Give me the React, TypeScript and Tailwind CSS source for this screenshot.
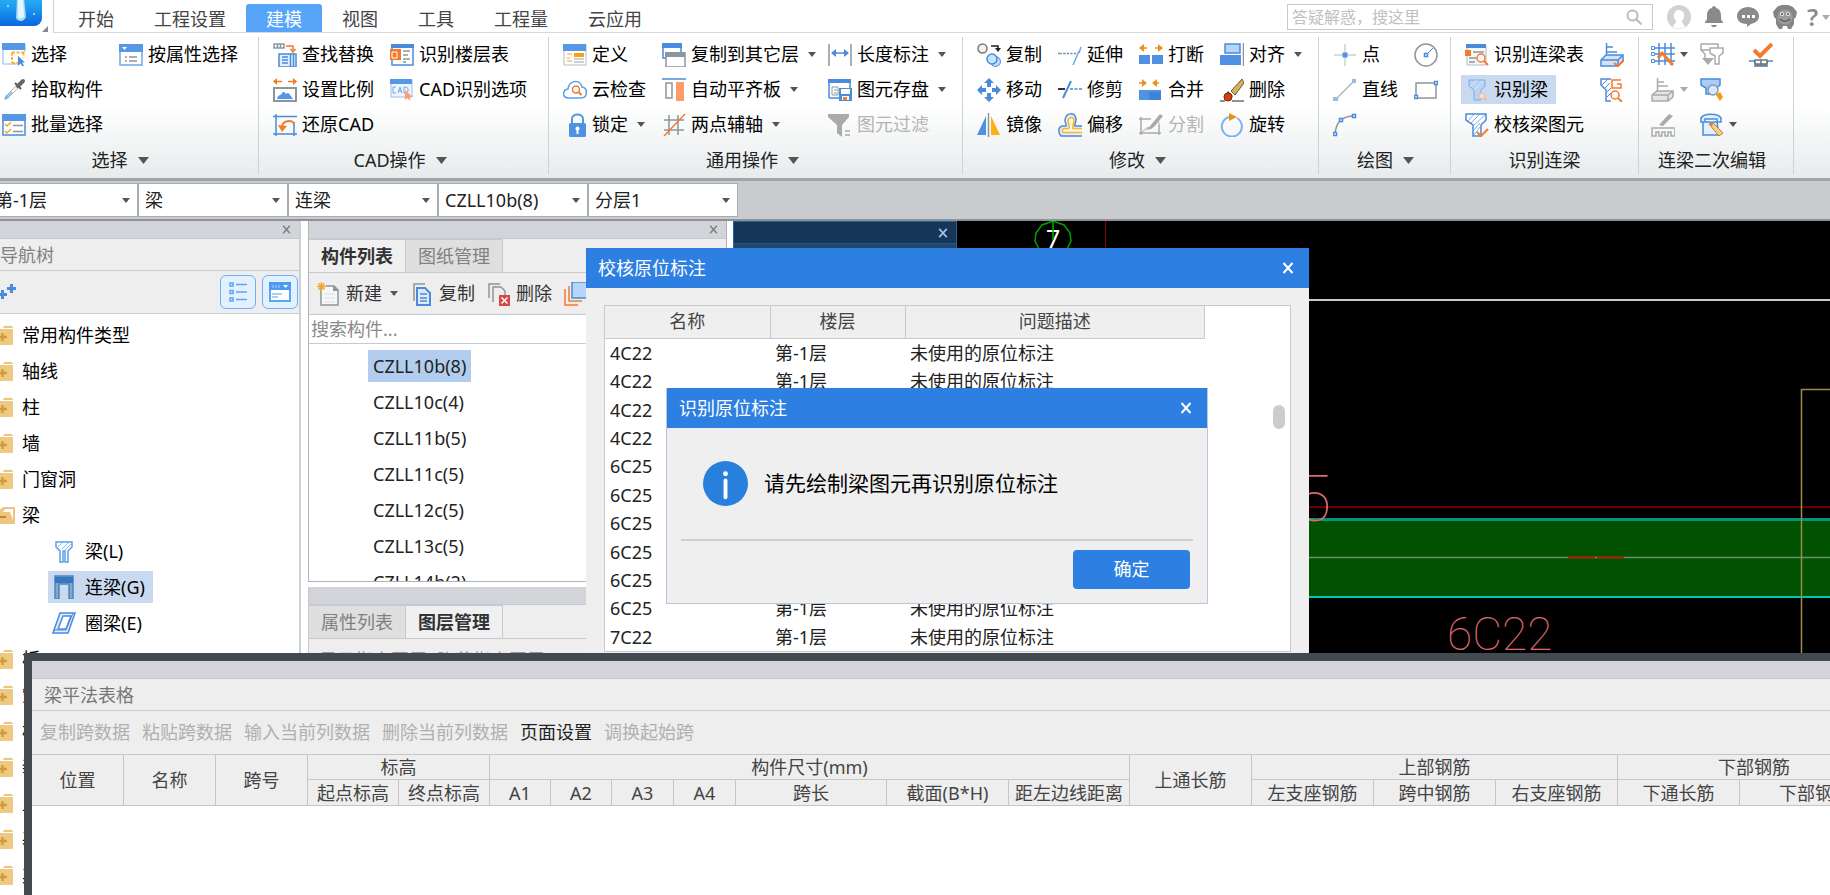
import React, { useState } from 'react';

const BLUE = '#4a8bdc';
const ORANGE = '#f47b2c';
const GRAY = '#8c979d';
const PALE = '#d3e4f8';
const MUTED = '#aaaaaa';

/* Every drawing lives on a 24 x 24 grid */
const icons: Record<string, React.ReactNode> = {
  select: (
    <>
      <path d="M1 21V1h22v8M1 21h15" stroke="#8fb6e6" />
      <path d="M0 0h23v7H0z" fill="#5598e6" />
      <path d="M10 9.5h12M10 9.5V20M10 20h6M21.500 9.500v5" stroke="#f8b62d" strokeWidth="2" strokeDasharray="3 1.5" />
      <path d="M16 13v10l2.500-2.500 2 3 1.500-1-2-3h3z" fill={BLUE} />
    </>
  ),
  picker: (
    <>
      <path d="M4 20l1-3L15 7l2 2L7 19z" fill="#fff" stroke="#aab2b6" />
      <path d="M2 22l2-5 3 3z" fill="#6ba9ef" />
      <path d="M5 19L10 14" stroke="#8fc0f5" strokeWidth="2" />
      <path d="M13 5L19 11" stroke="#555" strokeWidth="2" />
      <path d="M16 8l5-5" stroke="#666" strokeWidth="4" strokeLinecap="round" />
    </>
  ),
  batch: (
    <>
      <rect x="1" y="2" width="22" height="20" fill="#fff" stroke={BLUE} strokeWidth="1.500" />
      <path d="M0 1h24v7H0z" fill="#5598e6" />
      <path d="M3 11l2 2 4-4M3 18l2 2 4-4" stroke="#f8a12d" strokeWidth="1.500" />
      <path d="M11 12.500h10M11 18.500h10" stroke={GRAY} strokeWidth="1.500" />
    </>
  ),
  byProperty: (
    <>
      <rect x="1" y="2" width="22" height="20" fill="#fff" stroke="#6fa6e6" strokeWidth="1.500" />
      <path d="M0 1h24v8H0z" fill="#5598e6" />
      <path d="M3 4h5l-2.500 3z" fill="#fff" />
      <path d="M6 14h2M6 18h2M10 14h8M10 18h8" stroke={GRAY} strokeWidth="1.500" />
    </>
  ),
  findReplace: (
    <>
      <path d="M1 1h10v4H1zM4.500 1v4M7.500 1v4" stroke={GRAY} strokeWidth="1.500" />
      <path d="M13 3h7v4M17.500 6L20 9l2.500-3" stroke={ORANGE} strokeWidth="1.500" />
      <rect x="6" y="11" width="17" height="13" fill="#e2eefb" stroke={BLUE} strokeWidth="1.500" />
      <path d="M9 14h6M9 17h6M9 20h6M17.500 11v13M20.500 11v13" stroke={BLUE} strokeWidth="1.500" />
    </>
  ),
  scale: (
    <>
      <path d="M1 3.500h8M15 3.500h8" stroke={ORANGE} strokeWidth="1.500" />
      <path d="M0 3.500L4 0v7zM24 3.500L20 0v7z" fill={ORANGE} />
      <rect x="1" y="10" width="22" height="13" fill="#fff" stroke={GRAY} strokeWidth="2" />
      <path d="M4 21c1-5 4-3 5-6 1-2 3-1 4 1 2-2 3-1 4 1 1 1 2 2 3 4z" fill="#5598e6" />
    </>
  ),
  restore: (
    <>
      <path d="M3 1v22M21 9v14M0 3.500h24M0 21h24" stroke={BLUE} strokeWidth="1.500" />
      <path d="M9 13.500C10 8 18 6 21.500 11" stroke={ORANGE} strokeWidth="2" />
      <path d="M5 12l9 1-5 6z" fill={ORANGE} />
    </>
  ),
  floorTable: (
    <>
      <rect x="2" y="2" width="21" height="20" fill="#fff" stroke={BLUE} strokeWidth="1.500" />
      <path d="M1 1h23v4H1z" fill={BLUE} />
      <path d="M0 6h11v11H0z" fill={ORANGE} />
      <path d="M2 9h5v6H2z" stroke="#fff" />
      <path d="M13 8h7M13 12h5M13 16h7M13 19h3" stroke={GRAY} strokeWidth="1.500" />
    </>
  ),
  cadOption: (
    <>
      <rect x="1" y="2" width="21" height="17" fill="#eef5fd" stroke="#9cc0ea" />
      <path d="M0 1h22v5H0z" fill="#5598e6" />
      <path d="M6 9H3v6h3M8 15l2-6 2 6M9 13h3M14 9v6h2l2-1.500v-3L16 9z" stroke="#6fa6e6" />
      <path d="M15 12v10l2.500-2 2 2.500 1-.5-1-3h3z" fill="#f9a071" />
    </>
  ),
  define: (
    <>
      <rect x="1" y="2" width="22" height="20" fill="#fff" stroke="#b5bdc1" />
      <path d="M0 1h23v7H0z" fill="#5598e6" />
      <path d="M4 11h5M4 18h5M4 15h3" stroke="#f3c27c" strokeWidth="1.500" />
      <path d="M11 10h10v4H11z" fill="#f8a30c" />
      <path d="M11 16h10M11 19h10" stroke="#9aa4a9" />
    </>
  ),
  cloud: (
    <>
      <path d="M6 20C-1 20-1 12 5 11 6 2 17 1 19 9c6 1 6 11-1 11z" fill="#fff" stroke="#55a0ee" strokeWidth="1.500" />
      <circle cx="13" cy="11.500" r="3.500" stroke={ORANGE} strokeWidth="1.500" />
      <path d="M15.500 14l3 3" stroke={ORANGE} strokeWidth="2" />
    </>
  ),
  lock: (
    <>
      <path d="M9 11V6c0-6 11-6 11 0v5" stroke="#5598e6" strokeWidth="2" />
      <rect x="6" y="10" width="17" height="14" rx="1.500" fill="#4f92e2" />
      <path d="M14.500 17v4" stroke="#fff" strokeWidth="2" />
      <circle cx="14.500" cy="15.500" r="2" fill="#fff" />
    </>
  ),
  copyFloor: (
    <>
      <rect x="1" y="1" width="18" height="14" fill="#fff" stroke={BLUE} strokeWidth="1.500" />
      <path d="M0 0h20v5H0z" fill={BLUE} />
      <rect x="4" y="10" width="19" height="14" fill="#fff" stroke={GRAY} strokeWidth="1.500" />
      <path d="M3 9h20v5H3z" fill={GRAY} />
    </>
  ),
  alignSlab: (
    <>
      <path d="M0 1h24" stroke={BLUE} strokeWidth="1.500" />
      <path d="M4 5h6v15H4z" stroke={GRAY} strokeWidth="1.500" />
      <path d="M14 4h8v19h-8z" fill="#fc9b6b" />
    </>
  ),
  auxAxis: (
    <>
      <path d="M7 2v20M16 2v20M2 7h20M2 17h20" stroke={GRAY} strokeWidth="1.500" />
      <path d="M2 23L23 1" stroke={ORANGE} strokeWidth="1.500" />
    </>
  ),
  dimension: (
    <>
      <path d="M1 1v22M23 1v22" stroke={GRAY} strokeWidth="1.500" />
      <path d="M5 10h14" stroke={BLUE} strokeWidth="1.500" />
      <path d="M3 10l5-4v8zM21 10l-5-4v8z" fill={BLUE} />
    </>
  ),
  saveElement: (
    <>
      <path d="M1 20V2h21v8M1 20h10" stroke={BLUE} strokeWidth="1.500" />
      <path d="M0 1h23v4H0z" fill={BLUE} />
      <path d="M4 9h6v8H4zM6 12h3M6 15h3" stroke={GRAY} />
      <path d="M11 10h13v13H11z" fill="#4a8bdc" />
      <path d="M13 11h9v5h-9z" fill="#fff" />
      <path d="M14 18h7v4h-7z" fill="#fff" />
      <path d="M15 19h4v3h-4z" fill={ORANGE} />
    </>
  ),
  filter: (
    <>
      <path d="M0 1h21v3l-7 8v12l-5-4v-8L0 4z" fill={MUTED} />
      <path d="M17 18h5M17 22h5" stroke={MUTED} strokeWidth="1.500" />
    </>
  ),
  copy: (
    <>
      <circle cx="5.500" cy="5.500" r="4.500" fill="#f3f3f3" stroke="#77797b" strokeWidth="1.500" />
      <path d="M14 3h7v3" stroke="#222" strokeWidth="1.500" />
      <path d="M18 5h6l-3 4z" fill="#222" />
      <circle cx="18.500" cy="18.500" r="5" fill="#b9dcf8" stroke={BLUE} />
      <circle cx="15" cy="16" r="5" fill="#c8e6fb" stroke={BLUE} strokeWidth="1.500" />
    </>
  ),
  move: (
    <>
      <path d="M12 0l5 5h-3v4h-4V5H7zM12 24l5-5h-3v-4h-4v4H7zM0 12l5-5v3h4v4H5v3zM24 12l-5-5v3h-4v4h4v3z" fill={BLUE} />
    </>
  ),
  mirror: (
    <>
      <path d="M0 22L9 3v19z" fill="#4f92e2" />
      <path d="M23 22L14 3v19z" fill="#fbb117" />
      <path d="M11.500 0v24" stroke={GRAY} strokeWidth="1.500" />
    </>
  ),
  extend: (
    <>
      <path d="M0 10.500h8" stroke={GRAY} strokeWidth="1.500" strokeDasharray="4 1" />
      <path d="M9 10.500h10" stroke={BLUE} strokeWidth="1.500" strokeDasharray="2 1.500" />
      <path d="M15 22l6-14M21 10l2-6" stroke="#6fa6e6" strokeWidth="1.500" />
    </>
  ),
  trim: (
    <>
      <path d="M0 11h7" stroke="#333" strokeWidth="2" />
      <path d="M12 11h12" stroke={BLUE} strokeWidth="1.500" strokeDasharray="3 1.500" />
      <path d="M5 20l8-17" stroke={BLUE} strokeWidth="2" />
    </>
  ),
  offset: (
    <>
      <path d="M24 23H3c-3-3-3-9 1-10h4c1-2-1-2-1-6C8-1 17-1 18 6c0 5-2 5-1 7h7" fill="#e4eefa" stroke="#4a8bdc" strokeWidth="1.500" />
      <path d="M24 19.500H5c-1-1-1-4 1-4h5c1-3-1-5-1-8 1-4 6-4 6 0 0 3-2 5-1 8h9" fill="#fdf6e4" stroke="#f6b62c" strokeWidth="1.500" />
    </>
  ),
  breakIcon: (
    <>
      <path d="M2 5h6M16 5h6" stroke="#ee8e1e" strokeWidth="1.500" />
      <path d="M0 5l5-4v8zM24 5l-5-4v8z" fill="#ee8e1e" />
      <path d="M0 12h11v9H0zM13 12h11v9H13z" fill="#4f92e2" />
    </>
  ),
  merge: (
    <>
      <path d="M0 5h4M20 5h-4" stroke="#ee8e1e" strokeWidth="1.500" />
      <path d="M8 5L3 1v8zM13 5l5-4v8z" fill="#ee8e1e" />
      <path d="M0 12h22v10H0z" fill="#4f92e2" />
      <path d="M10 14h12v8H10z" fill="#3f84da" />
    </>
  ),
  split: (
    <>
      <path d="M0 6h12M2 4v18M0 20h22M20 12v10" stroke={MUTED} strokeWidth="1.500" />
      <path d="M2 20l7-6M20 9v4" stroke={MUTED} />
      <path d="M7 17l4-4L21 1l3 2-8 10-4 3z" fill={MUTED} />
    </>
  ),
  align: (
    <>
      <path d="M5 1h15v9H5z" fill="#b7d5f7" stroke="#4a8bdc" strokeWidth="1.500" />
      <path d="M0 12h21v10H0z" fill="#4f92e2" />
      <path d="M23.500 0v23" stroke={GRAY} strokeWidth="1.500" />
    </>
  ),
  erase: (
    <>
      <path d="M11 13L22 1l2 4L15 17z" fill="#d6b25c" stroke="#6b5530" />
      <path d="M8 13l5 5-3 3-5-4z" fill="#555" />
      <circle cx="8" cy="19" r="4" fill="#d4420c" stroke="#7a2404" />
      <path d="M0 23h5M12 23h12" stroke="#222" />
    </>
  ),
  rotate: (
    <>
      <path d="M9 4a10 10 0 1 0 8 1" stroke="#7fb2ec" strokeWidth="2" />
      <path d="M9 0l8 4-8 4z" fill="#ee8e1e" />
    </>
  ),
  point: (
    <>
      <path d="M12 1v22M1 12h22" stroke="#a9b9c8" />
      <rect x="9.500" y="9.500" width="5" height="5" fill="#4f92e2" />
    </>
  ),
  line: (
    <>
      <path d="M3 21L21 3" stroke="#a9b3ba" strokeWidth="1.500" />
      <path d="M0 19h5v4H0zM19 1h4v4h-4z" fill="#92bceb" />
    </>
  ),
  arc: (
    <>
      <path d="M2 21C3 9 10 3 21 3" stroke={GRAY} strokeWidth="1.500" />
      <path d="M.5 19.500h3v3h-3zM6.500 5.500h3v3h-3zM19.500 1.500h3v3h-3z" fill="#fff" stroke={BLUE} strokeWidth="1.500" />
    </>
  ),
  circle: (
    <>
      <circle cx="12" cy="12" r="11" fill="#fff" stroke={GRAY} strokeWidth="1.500" />
      <path d="M12 12l7-7" stroke={BLUE} />
      <path d="M10.500 10.500h3v3h-3z" fill="#fff" stroke={BLUE} strokeWidth="1.500" />
    </>
  ),
  rect: (
    <>
      <path d="M2 5h20v15H2z" fill="#fff" stroke={GRAY} strokeWidth="1.500" />
      <path d="M.5 17.500h3v3h-3zM20.500 3.500h3v3h-3z" fill="#fff" stroke={BLUE} strokeWidth="1.500" />
    </>
  ),
  beamTable: (
    <>
      <path d="M2 3h19v19H2z" fill="#f4f6f7" stroke="#b5bdc1" />
      <path d="M1 1h20v4H1z" fill={BLUE} />
      <path d="M0 7h6v6H0z" fill={ORANGE} />
      <path d="M8 9h11M4 15h7M4 19h6" stroke={GRAY} strokeWidth="1.500" />
      <circle cx="16" cy="15" r="4" fill="#fff" stroke={ORANGE} strokeWidth="1.500" />
      <path d="M19 18l4 4" stroke={ORANGE} strokeWidth="2" />
    </>
  ),
  recognize: (
    <>
      <path d="M4 2h16v6l-4 4v10H9V12L4 8z" fill="#b8d3f3" stroke="#7faae3" />
      <path d="M6 8l6-6M9 12l9-9" stroke="#dbe9f9" />
      <circle cx="17" cy="18" r="3" fill="#fbd9c8" stroke="#f4b69a" />
      <path d="M19 20l2 2" stroke="#f4b69a" strokeWidth="2" />
    </>
  ),
  checkBeam: (
    <>
      <path d="M1 1h20v6l-5 5v11H8V12L1 7z" fill="#fff" stroke={BLUE} strokeWidth="1.500" />
      <path d="M3 8l6-7M6 10l9-9M9 12L20 2M9 17l6-7M9 22l6-8" stroke={BLUE} strokeWidth=".7" />
      <path d="M12 19l4 4 7-7" stroke={ORANGE} strokeWidth="2" />
    </>
  ),
  beamMark: (
    <>
      <path d="M6.500 0v13M7 4h6M7 9h10" stroke={BLUE} strokeWidth="1.500" />
      <path d="M1 17l5-5h17v6l-5 5H1z" fill={PALE} stroke={BLUE} strokeWidth="1.500" />
      <path d="M1 17h17v6M18 17l5-5" stroke={BLUE} strokeWidth="1.500" />
      <path d="M14 20l4 3 6-6" stroke={ORANGE} strokeWidth="2" />
    </>
  ),
  beamGroup: (
    <>
      <path d="M11 1H1v6l5 5v11h5" stroke={BLUE} strokeWidth="1.500" />
      <path d="M2 7l6-6M5 10l5-5M7 14l4-4M7 19l4-4" stroke={BLUE} />
      <path d="M21 2h-9v8h9V6h-4" stroke={ORANGE} strokeWidth="1.500" />
      <circle cx="15" cy="17" r="4" fill="#fff" stroke={ORANGE} strokeWidth="1.500" />
      <path d="M18 20l4 4" stroke={ORANGE} strokeWidth="2" />
    </>
  ),
  gridEdit: (
    <>
      <path d="M8 0v22M14 0v22M20 0v22M4 5h20M4 11h20M4 18h20" stroke={BLUE} strokeWidth="1.500" />
      <path d="M.5 3.500h3v3h-3zM.5 9.500h3v3h-3zM.5 16.500h3v3h-3z" fill="#fff" stroke={BLUE} />
      <path d="M7 15l5-6M11 10l11 12" stroke={ORANGE} strokeWidth="3" />
    </>
  ),
  markOff: (
    <>
      <path d="M6.500 0v13M7 4h6M7 8h10" stroke={MUTED} strokeWidth="1.500" />
      <path d="M1 17l5-4h16v6l-5 4H1zM1 17h16v6M17 17l5-4" fill="#e5e5e5" stroke={MUTED} strokeWidth="1.500" />
    </>
  ),
  support: (
    <>
      <path d="M8 12L18 1l4 2L12 13z" fill={MUTED} />
      <path d="M1 23v-8h23v8h-4v-4h-3v4h-3v-4h-3v4H8v-4H5v4z" stroke={MUTED} strokeWidth="1.500" />
    </>
  ),
  convert: (
    <>
      <path d="M1 7V1h17v4M9 7H1l4 4v5M10 5h13v5l-4 3v8h-4v-8l-5-3z" stroke={MUTED} strokeWidth="1.500" />
      <path d="M2 15h12l-6 7z" fill={MUTED} />
    </>
  ),
  beamSearch: (
    <>
      <path d="M1 1h19v6l-4 3v6H6v-6L1 7z" fill="#a9cdf5" stroke={BLUE} strokeWidth="1.500" />
      <circle cx="13" cy="12" r="5" fill="#d8e8fa" stroke="#8a99b5" strokeWidth="1.500" />
      <path d="M16 17l4-3 3 5-3 4z" fill="#f39a12" />
    </>
  ),
  beamPencil: (
    <>
      <path d="M1 9V5c3-5 17-5 20 0v4h-4V6H5v3zM3 9h14l2 13H3z" fill="#e3effc" stroke={BLUE} strokeWidth="1.500" />
      <path d="M9 11l4-1 10 10-4 3z" fill="#f6d08b" stroke="#b7813a" />
      <path d="M9 11l4-1-1 4z" fill={ORANGE} />
    </>
  ),
  inspect: (
    <>
      <path d="M5 7l6 6L23 1" stroke={ORANGE} strokeWidth="4" />
      <path d="M0 18h5l2 4h10l2-4h5" stroke={BLUE} strokeWidth="1.500" />
      <path d="M6 17h12v4H6z" fill="#fff" stroke="#66747d" strokeWidth="1.500" />
      <path d="M12 17v4M5 23h14" stroke="#66747d" strokeWidth="1.500" />
    </>
  ),
  newDoc: (
    <>
      <path d="M4 7v16h17V8l-4-4H9" fill="#f7f7f7" stroke={GRAY} strokeWidth="1.500" />
      <path d="M16 3v6h6z" fill={GRAY} />
      <path d="M7 12h11M7 16h11M7 20h11" stroke="#dcdfe1" />
      <path d="M4.500 0v9M0 4.500h9M1.500 1.500l6 6M7.500 1.500l-6 6" stroke="#f5a62a" strokeWidth="1.500" />
    </>
  ),
  copyDoc: (
    <>
      <path d="M4 19V2h11" stroke={GRAY} strokeWidth="1.500" />
      <path d="M7 6h8l5 5v12H7z" fill="#dceafa" stroke={BLUE} strokeWidth="2" />
      <path d="M10 12h7M10 16h7M10 19h7" stroke={BLUE} strokeWidth="1.500" />
    </>
  ),
  deleteDoc: (
    <>
      <path d="M2 16V2h11M6 20V5h8l4 4v4" stroke={GRAY} strokeWidth="1.500" />
      <path d="M12 13h11v11H12z" fill="#d84848" />
      <path d="M14.500 15.500l6 6M20.500 15.500l-6 6" stroke="#fff" strokeWidth="1.500" />
    </>
  ),
  layerCopy: (
    <>
      <path d="M1 7v16h13M5 4v15h13" stroke={ORANGE} strokeWidth="1.500" />
      <path d="M8 0h16v16H8z" fill="#b7d5f7" stroke={BLUE} strokeWidth="1.500" />
    </>
  ),
  beam: (
    <>
      <path d="M4 3h16v5l-4 4v11h-3V12h-2v11H8V12L4 8z" fill="#fff" stroke="#5b9ee8" strokeWidth="1.500" />
      <path d="M6 8l5-5M10 10l7-7M13 11l6-6" stroke="#5b9ee8" strokeWidth=".7" />
    </>
  ),
  coupling: (
    <>
      <path d="M3 1h18v23h-4V9H7v15H3z" fill="#7fa9cb" stroke="#4d87b5" strokeWidth="1.500" />
      <path d="M3 2h18v6H3z" fill="#3477c2" />
    </>
  ),
  ring: (
    <>
      <path d="M8 2h15l-7 20H1z" fill="#dfecfb" stroke={BLUE} strokeWidth="1.500" />
      <path d="M11 5h8l-5 13H6z" fill="#fff" stroke={BLUE} strokeWidth="1.500" />
      <path d="M1 19h13l7-17" stroke={BLUE} />
    </>
  ),
};

const Icon: React.FC<{ name: string }> = ({ name }) => (
  <svg className="size-6 shrink-0" viewBox="0 0 24 24" fill="none" aria-hidden="true">
    {icons[name]}
  </svg>
);

const Arrow: React.FC<{ big?: boolean; muted?: boolean }> = ({ big, muted }) => (
  <svg className={big ? 'h-[7px] w-[11px] shrink-0' : 'h-[5px] w-2 shrink-0'} viewBox="0 0 10 6" preserveAspectRatio="none" aria-hidden="true">
    <path d="M0 0h10L5 6z" fill={muted ? '#aaa' : '#555'} />
  </svg>
);

const CloseX: React.FC<{ className: string }> = ({ className }) => (
  <svg className={className} viewBox="0 0 12 12" fill="none" aria-hidden="true">
    <path d="M1.500 1l9 10M10.500 1l-9 10" stroke="currentColor" strokeWidth="2" />
  </svg>
);

interface Tool {
  icon: string;
  label?: string;
  title?: string;
  arrow?: boolean;
  disabled?: boolean;
  active?: boolean;
}

interface ToolGroup {
  label: string;
  arrow?: boolean;
  className: string;
  columns: Tool[][];
}

const tabs = ['开始', '工程设置', '建模', '视图', '工具', '工程量', '云应用'];

const groups: ToolGroup[] = [
  {
    label: '选择',
    arrow: true,
    className: 'pl-0.5 pr-5',
    columns: [
      [
        { icon: 'select', label: '选择' },
        { icon: 'picker', label: '拾取构件' },
        { icon: 'batch', label: '批量选择' },
      ],
      [{ icon: 'byProperty', label: '按属性选择' }],
    ],
  },
  {
    label: 'CAD操作',
    arrow: true,
    className: 'pl-3.5 pr-[21px]',
    columns: [
      [
        { icon: 'findReplace', label: '查找替换' },
        { icon: 'scale', label: '设置比例' },
        { icon: 'restore', label: '还原CAD' },
      ],
      [
        { icon: 'floorTable', label: '识别楼层表' },
        { icon: 'cadOption', label: 'CAD识别选项' },
      ],
    ],
  },
  {
    label: '通用操作',
    arrow: true,
    className: 'pl-3.5 pr-5',
    columns: [
      [
        { icon: 'define', label: '定义' },
        { icon: 'cloud', label: '云检查' },
        { icon: 'lock', label: '锁定', arrow: true },
      ],
      [
        { icon: 'copyFloor', label: '复制到其它层', arrow: true },
        { icon: 'alignSlab', label: '自动平齐板', arrow: true },
        { icon: 'auxAxis', label: '两点辅轴', arrow: true },
      ],
      [
        { icon: 'dimension', label: '长度标注', arrow: true },
        { icon: 'saveElement', label: '图元存盘', arrow: true },
        { icon: 'filter', label: '图元过滤', disabled: true },
      ],
    ],
  },
  {
    label: '修改',
    arrow: true,
    className: 'pl-3.5 pr-5',
    columns: [
      [
        { icon: 'copy', label: '复制' },
        { icon: 'move', label: '移动' },
        { icon: 'mirror', label: '镜像' },
      ],
      [
        { icon: 'extend', label: '延伸' },
        { icon: 'trim', label: '修剪' },
        { icon: 'offset', label: '偏移' },
      ],
      [
        { icon: 'breakIcon', label: '打断' },
        { icon: 'merge', label: '合并' },
        { icon: 'split', label: '分割', disabled: true },
      ],
      [
        { icon: 'align', label: '对齐', arrow: true },
        { icon: 'erase', label: '删除' },
        { icon: 'rotate', label: '旋转' },
      ],
    ],
  },
  {
    label: '绘图',
    arrow: true,
    className: 'pl-3.5 pr-3',
    columns: [
      [{ icon: 'point', label: '点' }, { icon: 'line', label: '直线' }, { icon: 'arc', title: '弧线' }],
      [{ icon: 'circle', title: '圆' }, { icon: 'rect', title: '矩形' }],
    ],
  },
  {
    label: '识别连梁',
    className: 'pl-3.5 pr-3.5',
    columns: [
      [
        { icon: 'beamTable', label: '识别连梁表' },
        { icon: 'recognize', label: '识别梁', active: true },
        { icon: 'checkBeam', label: '校核梁图元' },
      ],
      [{ icon: 'beamMark', title: '识别原位标注' }, { icon: 'beamGroup', title: '编辑支座' }],
    ],
  },
  {
    label: '连梁二次编辑',
    className: 'pl-3 pr-5',
    columns: [
      [
        { icon: 'gridEdit', title: '重提梁跨', arrow: true },
        { icon: 'markOff', title: '原位标注', arrow: true, disabled: true },
        { icon: 'support', title: '刷新支座', disabled: true },
      ],
      [
        { icon: 'convert', title: '应用到同名梁', disabled: true },
        { icon: 'beamSearch', title: '查改标高' },
        { icon: 'beamPencil', title: '生成架立筋', arrow: true },
      ],
      [{ icon: 'inspect', title: '检查连梁' }],
    ],
  },
];

const ToolButton: React.FC<{ tool: Tool }> = ({ tool }) => (
  <div className="flex h-[35px] items-center">
    <button
      title={tool.title}
      disabled={tool.disabled}
      className={`flex h-[29px] items-center gap-[5px] whitespace-nowrap ${tool.disabled ? 'text-[#b4b4b4]' : 'text-black'} ${
        tool.active ? '-mx-1 bg-[#c9d9ef] pl-1 pr-2' : ''
      }`}
    >
      <Icon name={tool.icon} />
      {tool.label}
      {tool.arrow && (
        <span className={tool.label ? '-mr-1 ml-1' : '-mr-1'}>
          <Arrow muted={tool.disabled} />
        </span>
      )}
    </button>
  </div>
);

const Header: React.FC = () => {
  const [active, setActive] = useState('建模');
  return (
    <header className="flex h-[33px] shrink-0 bg-white">
      <div className="relative w-[54px] shrink-0 border-r border-[#cfcfcf]">
        <svg className="h-[33px] w-[53px]" viewBox="0 0 53 33" aria-hidden="true">
          <defs>
            <linearGradient id="logo" x1="0" y1="0" x2="0" y2="1">
              <stop offset="0" stopColor="#35c4f8" />
              <stop offset="0.500" stopColor="#22a5f2" />
              <stop offset="1" stopColor="#0b66dc" />
            </linearGradient>
          </defs>
          <rect x="-6" y="-20" width="48" height="46" rx="8" fill="url(#logo)" />
          <path d="M17-2h7l2 19c-2 5-8 5-10 1z" fill="#a9dcf8" />
          <path d="M18-2h5l1 18c-1 3-4 3-6 1z" fill="#e6f6fd" />
          <circle cx="8" cy="6" r="1" fill="#bfe6fb" />
          <circle cx="34" cy="14" r="1" fill="#bfe6fb" />
          <path d="M48 26v6h-6z" fill="#888" />
        </svg>
      </div>
      <div className="flex grow items-end border-b border-[#d9d9d9] pl-1">
        <nav className="flex">
          {tabs.map((tab) => (
            <button
              key={tab}
              onClick={() => setActive(tab)}
              className={`h-7 rounded-t-[3px] px-5 leading-[30px] ${tab === active ? 'bg-[#57a5f8] text-white' : 'text-[#444]'}`}
            >
              {tab}
            </button>
          ))}
        </nav>
        <div className="mb-0.5 ml-auto flex items-center text-[#8a8a8a]">
          <label className="mr-3.5 flex h-[26px] w-[366px] items-center border border-[#c9c9c9] bg-white px-1">
            <input
              aria-label="搜索"
              placeholder="答疑解惑，搜这里"
              className="w-full min-w-0 text-base text-black outline-none placeholder:text-[#c0c0c0]"
            />
            <svg className="mr-1.5 size-4 shrink-0" viewBox="0 0 16 16" fill="none" stroke="#bbb" strokeWidth="2" aria-hidden="true">
              <circle cx="6.500" cy="6.500" r="5" />
              <path d="M10.500 10.500l5 5" />
            </svg>
          </label>
          <svg className="size-6" viewBox="0 0 24 24" aria-hidden="true">
            <circle cx="12" cy="12" r="12" fill="#d2d2d2" />
            <path d="M6 22c1-4 3-3 3-6-4-5-2-11 3-11s7 6 3 11c0 3 2 2 3 6-3 2-9 2-12 0z" fill="#fff" />
          </svg>
          <svg className="ml-3.5 h-[22px] w-[18px]" viewBox="0 0 18 22" fill="currentColor" aria-hidden="true">
            <path d="M9 0c1 0 2 1 2 2 4 1 5 4 5 8 0 3 0 4 2 6v1H0v-1c2-2 2-3 2-6 0-4 1-7 5-8 0-1 1-2 2-2zM6 19h6c-1 3-5 3-6 0z" />
          </svg>
          <svg className="ml-3.5 h-5 w-[22px]" viewBox="0 0 22 20" aria-hidden="true">
            <path d="M11 0c6 0 11 4 11 9s-4 7-8 8l-4 3v-3C4 17 0 14 0 9s5-9 11-9z" fill="#8a8a8a" />
            <path d="M5 8h3v3H5zM10 8h3v3h-3zM15 8h3v3h-3z" fill="#fff" />
          </svg>
          <svg className="ml-3.5 size-6" viewBox="0 0 24 24" aria-hidden="true">
            <path d="M4 2c5-3 11-3 16 0l4 5-1 5-2 2v5l-3 5h-3l-1-3h-4l-1 3H6l-3-5v-5l-2-2-1-5z" fill="#858585" />
            <circle cx="12" cy="12" r="7.500" fill="#9d9d9d" />
            <circle cx="9" cy="9" r="2" fill="#efefef" />
            <circle cx="15" cy="9" r="2" fill="#efefef" />
            <path d="M7 14c3 3 7 3 10 0" stroke="#555" strokeWidth="1.500" fill="none" />
            <circle cx="9" cy="9" r="1" fill="#444" />
            <circle cx="15" cy="9" r="1" fill="#444" />
          </svg>
          <button className="ml-2.5 flex items-center gap-1 text-2xl leading-6" aria-label="帮助">
            <span className="font-semibold">?</span>
            <Arrow muted />
          </button>
        </div>
      </div>
    </header>
  );
};

const Ribbon: React.FC = () => (
  <section className="flex shrink-0 border-b-[3px] border-[#a0a4a6] bg-gradient-to-b from-white from-50% to-[#e7ebec] pb-1 pt-1">
    {groups.map((group) => (
      <div key={group.label} className={`h-[137px] shrink-0 border-r border-[#cfd2d4] ${group.className}`}>
        <div className="flex h-[105px] gap-4">
          {group.columns.map((column, i) => (
            <div key={i} className="flex flex-col">
              {column.map((tool) => (
                <ToolButton key={tool.icon} tool={tool} />
              ))}
            </div>
          ))}
        </div>
        <div className="flex h-9 items-center justify-center gap-2.5 text-[#222]">
          {group.label}
          {group.arrow && <Arrow big />}
        </div>
      </div>
    ))}
  </section>
);

const selectors = [
  { label: '楼层', value: '第-1层' },
  { label: '构件大类', value: '梁' },
  { label: '构件类型', value: '连梁' },
  { label: '构件', value: 'CZLL10b(8)' },
  { label: '分层', value: '分层1' },
];

const SelectorBar: React.FC = () => (
  <section className="-ml-3 flex h-10 shrink-0 items-center border-b-2 border-[#8e9295] bg-[#c9cccf]">
    {selectors.map((s) => (
      <label key={s.label} className="relative w-[150px]">
        <select
          aria-label={s.label}
          className="h-[34px] w-full appearance-none border border-[#a9acae] bg-white pl-1.5 pr-5 text-[#222] outline-none"
        >
          <option>{s.value}</option>
        </select>
        <span className="pointer-events-none absolute right-2 top-[15px] flex">
          <Arrow />
        </span>
      </label>
    ))}
  </section>
);

const PanelStrip: React.FC<{ closable?: boolean }> = ({ closable }) => (
  <div className="flex h-[18px] shrink-0 items-center justify-end border-b border-[#c6cad0] bg-[#d3d4d9] pr-2">
    {closable && (
      <button aria-label="关闭" className="text-[#808080]">
        <CloseX className="size-[9px]" />
      </button>
    )}
  </div>
);

interface TreeNode {
  label: string;
  icon?: string;
  open?: boolean;
  active?: boolean;
}

const tree: TreeNode[] = [
  { label: '常用构件类型' },
  { label: '轴线' },
  { label: '柱' },
  { label: '墙' },
  { label: '门窗洞' },
  { label: '梁', open: true },
  { label: '梁(L)', icon: 'beam' },
  { label: '连梁(G)', icon: 'coupling', active: true },
  { label: '圈梁(E)', icon: 'ring' },
  { label: '板' },
  { label: '空心楼盖' },
  { label: '楼梯' },
  { label: '装修' },
  { label: '土方' },
  { label: '基础' },
  { label: '其它' },
];

const Folder: React.FC<{ open?: boolean }> = ({ open }) => (
  <svg className="-ml-1 h-[19px] w-[19px] shrink-0" viewBox="0 0 19 19" aria-hidden="true">
    {open ? (
      <>
        <path d="M5 3l2-2h12v17H1V3z" fill="#edc57c" />
        <path d="M9 3h8v11l-3-8H7z" fill="#fff" />
        <path d="M3 11h7" stroke="#b98a2c" strokeWidth="2" />
      </>
    ) : (
      <>
        <path d="M7 2l1-2h8l1 2z" fill="#edc57c" />
        <rect x="0" y="3" width="17" height="16" rx="1" fill="#efc982" />
        <path d="M6.500 7v8M2 11h9" stroke="#cf9d3e" strokeWidth="2.500" />
      </>
    )}
  </svg>
);

const NavigationTree: React.FC = () => (
  <aside className="flex w-[301px] shrink-0 flex-col border-r-2 border-[#cdd1d6] bg-white">
    <PanelStrip closable />
    <h2 className="h-8 shrink-0 border-b border-[#c9ccd0] bg-[#eee] leading-8 text-[#808080]">导航树</h2>
    <div className="flex h-[43px] shrink-0 items-center justify-end gap-1.5 border-b border-[#c9ccd0] bg-[#eee] pr-px">
      <svg className="mr-auto h-5 w-4" viewBox="0 0 16 20" aria-hidden="true">
        <path d="M11.500 2v9M7 6.500h9M2.500 8v9M-2 12.500h9" stroke={BLUE} strokeWidth="3" />
      </svg>
      <button aria-label="列表视图" className="rounded-md border border-[#6db0f8] bg-[#e3f0fe] px-2 py-[5px]">
        <svg className="h-[22px] w-[18px]" viewBox="0 0 18 22" fill="none" stroke="#5ba5f3" strokeWidth="1.500" aria-hidden="true">
          <path d="M1 2h3v3H1zM1 9.500h3v3H1zM1 17h3v3H1zM7 3.500h11M7 11h11M7 18.500h11" />
        </svg>
      </button>
      <button aria-label="图标视图" className="rounded-md border border-[#6db0f8] bg-[#e3f0fe] px-1.5 py-[5px]">
        <svg className="h-[22px] w-[22px]" viewBox="0 0 22 22" fill="none" aria-hidden="true">
          <rect x="1" y="2" width="20" height="18" fill="#fff" stroke="#5ba5f3" strokeWidth="2" />
          <path d="M0 1h22v8H0z" fill="#4d9bf0" />
          <path d="M4 4v3M7 4v3M10 4v3M3 13h10M3 16h6" stroke="#8fc0f5" strokeWidth="1.500" />
          <path d="M14 4h5l-2.500 3z" fill="#fff" />
        </svg>
      </button>
    </div>
    <ul className="pt-[3px] text-black">
      {tree.map((node) => (
        <li key={node.label} className="flex h-9 items-center">
          {node.icon ? (
            <button
              className={`ml-12 flex h-8 items-center gap-[9px] pl-1 pr-2 ${node.active ? 'bg-[#c9d9ef]' : ''}`}
            >
              <Icon name={node.icon} />
              {node.label}
            </button>
          ) : (
            <button className="flex items-center gap-[7px] whitespace-nowrap">
              <Folder open={node.open} />
              {node.label}
            </button>
          )}
        </li>
      ))}
    </ul>
  </aside>
);

const components = ['CZLL10b(8)', 'CZLL10c(4)', 'CZLL11b(5)', 'CZLL11c(5)', 'CZLL12c(5)', 'CZLL13c(5)', 'CZLL14b(2)'];

const PanelTabs: React.FC<{ items: string[]; active: string }> = ({ items, active }) => (
  <div className="flex h-[34px] shrink-0 border-b border-[#c6cad0] bg-[#eee]">
    {items.map((item) => (
      <button
        key={item}
        className={`border-r border-t border-[#c6cad0] px-3 ${
          item === active ? 'bg-[#f0f0f0] font-bold text-[#333]' : 'bg-[#dfdfdf] text-[#808080]'
        }`}
      >
        {item}
      </button>
    ))}
  </div>
);

const ComponentPanels: React.FC = () => (
  <div className="ml-[7px] flex w-[419px] shrink-0 flex-col">
    <section className="flex h-[361px] shrink-0 flex-col border-x border-b border-[#b0b4b8]">
      <PanelStrip closable />
      <PanelTabs items={['构件列表', '图纸管理']} active="构件列表" />
      <div className="flex h-[42px] shrink-0 items-center gap-3 border-b border-[#c6cad0] bg-[#eee] pl-2 text-[#333]">
        <button className="flex items-center gap-[5px]">
          <Icon name="newDoc" />
          新建
          <span className="ml-[3px]">
            <Arrow />
          </span>
        </button>
        <button className="flex items-center gap-[5px]">
          <Icon name="copyDoc" />
          复制
        </button>
        <button className="flex items-center gap-[5px]">
          <Icon name="deleteDoc" />
          删除
        </button>
        <button aria-label="层间复制">
          <Icon name="layerCopy" />
        </button>
      </div>
      <input
        aria-label="搜索构件"
        placeholder="搜索构件..."
        className="h-[29px] shrink-0 border-b border-[#c6cad0] bg-white px-0.5 outline-none placeholder:text-[#8a8a8a]"
      />
      <ul className="min-h-0 grow overflow-hidden bg-white pl-[59px] pt-1 text-[#222]">
        {components.map((name, i) => (
          <li key={name} className="flex h-9 items-center">
            <button className={`h-8 px-[5px] ${i === 0 ? 'bg-[#b2cdee]' : ''}`}>{name}</button>
          </li>
        ))}
      </ul>
    </section>
    <section className="mt-[5px] flex grow flex-col border-x border-[#c6cad0] bg-[#eee]">
      <PanelStrip />
      <PanelTabs items={['属性列表', '图层管理']} active="图层管理" />
      <div className="flex h-[42px] items-center gap-2.5 pl-2.5 text-[#999]">
        <button>显示指定图层</button>
        <button>隐藏指定图层</button>
      </div>
    </section>
  </div>
);

const DrawingArea: React.FC = () => (
  <div className="flex grow bg-black">
    <section className="w-[224px] shrink-0 border border-[#2a6199] bg-[#1d4872]">
      <div className="flex h-[22px] items-center justify-end border-b border-[#2a5580] bg-[#163658] pr-2 text-[#9cc4ee]">
        <button aria-label="关闭">
          <CloseX className="size-2.5" />
        </button>
      </div>
    </section>
    <svg className="h-[440px] w-[873px] shrink-0" viewBox="957 221 873 440" fill="none" aria-hidden="true">
      <path d="M1105.500 221v440" stroke="#8a0000" />
      <path d="M1053 221l11 4 6 8 1 8-5 10-13 5-13-5-5-10 1-8 6-8z" stroke="#00a000" strokeWidth="1.500" />
      <text x="1046" y="248" fontSize="25" fontFamily="Noto Sans" fill="#fff">
        7
      </text>
      <path d="M1053 221v19" stroke="#00b400" strokeWidth="1.500" />
      <path d="M1107 300h723" stroke="#c8cccc" strokeWidth="2" />
      <path d="M1107 507h723" stroke="#8a0000" strokeWidth="1.500" />
      <path d="M1107 520h723v76h-723z" fill="#005200" />
      <path d="M1107 519.500h723" stroke="#00957f" strokeWidth="3" />
      <path d="M1107 557.500h723" stroke="#6d9268" strokeWidth="1.500" />
      <path d="M1568 557.500h27M1597 557.500h27" stroke="#b01a00" strokeWidth="2" />
      <path d="M1107 597h723" stroke="#00c8b4" strokeWidth="2" />
      <path d="M1801.500 661V389.500H1830" stroke="#a08a48" strokeWidth="1.500" />
      <g fontFamily="Roboto, Lato" fontWeight="100" fill="#e0696c">
        <text x="1296" y="521" fontSize="64">
          5
        </text>
        <text x="1447" y="650" fontSize="46">
          6C22
        </text>
      </g>
    </svg>
  </div>
);

const issues = ['4C22', '4C22', '4C22', '4C22', '6C25', '6C25', '6C25', '6C25', '6C25', '6C25', '7C22'];

const DialogTitle: React.FC<{ title: string }> = ({ title }) => (
  <div className="flex h-10 items-center justify-between bg-[#2d7fe1] pl-3 pr-[15px] text-white">
    <h2>{title}</h2>
    <button aria-label="关闭">
      <CloseX className="size-3" />
    </button>
  </div>
);

const CheckDialog: React.FC = () => (
  <section role="dialog" aria-label="校核原位标注" className="absolute left-[586px] top-[248px] h-[440px] w-[723px] bg-[#efefef]">
    <DialogTitle title="校核原位标注" />
    <div className="relative mx-[18px] mt-[17px] border border-[#c9c9c9] bg-white">
      <table className="h-[345px] w-[600px] table-fixed border-collapse text-[#222]">
        <colgroup>
          <col className="w-[165px]" />
          <col className="w-[135px]" />
          <col />
        </colgroup>
        <thead>
          <tr className="h-8 bg-[#efefef] text-[#444]">
            {['名称', '楼层', '问题描述'].map((h) => (
              <th key={h} className="border-b border-r border-[#c9c9c9] font-normal">
                {h}
              </th>
            ))}
          </tr>
        </thead>
        <tbody>
          {issues.map((name, i) => (
            <tr key={i}>
              <td className="px-[5px] leading-6">{name}</td>
              <td className="px-[5px] leading-6">第-1层</td>
              <td className="px-[5px] leading-6">未使用的原位标注</td>
            </tr>
          ))}
        </tbody>
      </table>
      <div className="absolute right-[5px] top-[99px] h-6 w-3 rounded-full bg-[#ccc]" />
    </div>
  </section>
);

const MessageDialog: React.FC = () => (
  <section
    role="alertdialog"
    aria-label="识别原位标注"
    className="absolute left-[666px] top-[388px] h-[216px] w-[542px] border border-t-0 border-[#b9c6db] bg-[#efefef]"
  >
    <DialogTitle title="识别原位标注" />
    <div className="mx-3.5 flex h-[113px] items-center gap-4 border-b-2 border-[#cdd0d2] px-[22px]">
      <svg className="size-[45px] shrink-0" viewBox="0 0 46 46" aria-hidden="true">
        <circle cx="23" cy="23" r="23" fill="#2880dc" />
        <circle cx="23" cy="13" r="2.500" fill="#fff" />
        <path d="M23 20v17" stroke="#fff" strokeWidth="4" strokeLinecap="round" />
      </svg>
      <p className="text-[21px] text-black">请先绘制梁图元再识别原位标注</p>
    </div>
    <div className="mt-[9px] flex justify-end px-[17px]">
      <button className="h-[39px] w-[117px] rounded bg-[#2d7fe1] text-white">确定</button>
    </div>
  </section>
);

const beamActions = [
  { label: '复制跨数据' },
  { label: '粘贴跨数据' },
  { label: '输入当前列数据' },
  { label: '删除当前列数据' },
  { label: '页面设置', enabled: true },
  { label: '调换起始跨' },
];

const topHeads = [
  { label: '位置', rows: 2 },
  { label: '名称', rows: 2 },
  { label: '跨号', rows: 2 },
  { label: '标高', cols: 2 },
  { label: '构件尺寸(mm)', cols: 7 },
  { label: '上通长筋', rows: 2 },
  { label: '上部钢筋', cols: 3 },
  { label: '下部钢筋', cols: 2 },
];

const subHeads = [
  '起点标高', '终点标高', 'A1', 'A2', 'A3', 'A4', '跨长', '截面(B*H)', '距左边线距离',
  '左支座钢筋', '跨中钢筋', '右支座钢筋', '下通长筋', '下部钢筋',
];

const headCell = 'border-b border-r border-[#c6c6c6] p-0 font-normal leading-6';

const BeamTable: React.FC = () => (
  <section className="absolute bottom-0 left-6 right-0 top-[653px] flex flex-col overflow-hidden border-l-8 border-t-8 border-[#434951] bg-white">
    <PanelStrip />
    <h2 className="h-8 shrink-0 border-b border-[#c9ccd0] bg-[#eee] pl-3 leading-8 text-[#777]">梁平法表格</h2>
    <div className="flex h-11 shrink-0 items-center gap-3 border-b border-[#c6c6c6] bg-[#eee] pl-2">
      {beamActions.map((a) => (
        <button key={a.label} disabled={!a.enabled} className={a.enabled ? 'text-[#222]' : 'text-[#b0b0b0]'}>
          {a.label}
        </button>
      ))}
    </div>
    <table className="w-[1859px] table-fixed border-separate border-spacing-0 bg-[#eee] text-[#444]">
      <colgroup>
        <col span={3} className="w-[92px]" />
        <col span={2} className="w-[91px]" />
        <col span={2} className="w-[61px]" />
        <col span={2} className="w-[62px]" />
        <col className="w-[151px]" />
        <col className="w-[122px]" />
        <col className="w-[121px]" />
        <col span={5} className="w-[122px]" />
        <col />
      </colgroup>
      <thead>
        <tr className="h-[25px]">
          {topHeads.map((h) => (
            <th key={h.label} rowSpan={h.rows} colSpan={h.cols} className={headCell}>
              {h.label}
            </th>
          ))}
        </tr>
        <tr className="h-[26px]">
          {subHeads.map((h) => (
            <th key={h} className={headCell}>
              {h}
            </th>
          ))}
        </tr>
      </thead>
    </table>
  </section>
);

const App: React.FC = () => (
  <div className="relative flex h-screen flex-col overflow-hidden bg-white font-['Noto_Sans','Noto_Sans_CJK_SC',sans-serif] text-[18px]">
    <Header />
    <Ribbon />
    <SelectorBar />
    <main className="flex min-h-0 grow overflow-hidden">
      <NavigationTree />
      <ComponentPanels />
      <div className="w-1.5 shrink-0" />
      <DrawingArea />
    </main>
    <CheckDialog />
    <MessageDialog />
    <BeamTable />
  </div>
);

export default App;
